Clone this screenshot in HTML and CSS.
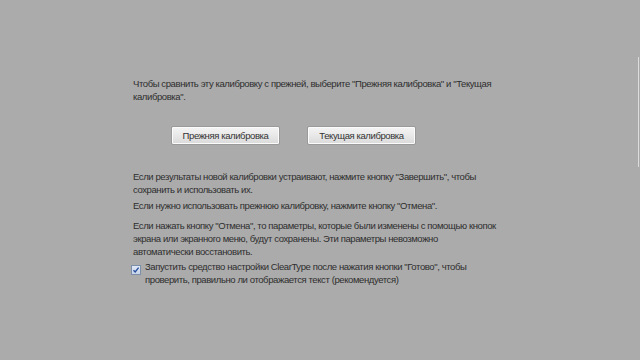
FILE: index.html
```html
<!DOCTYPE html>
<html lang="ru">
<head>
    <meta charset="UTF-8">
    <title>Средство настройки текста ClearType</title>
    <link rel="stylesheet" href="styles.css">
</head>
<body>
    <div class="page">
        <p class="txt first">Чтобы сравнить эту калибровку с прежней, выберите "Прежняя калибровка" и "Текущая<br>калибровка".</p>
        <div class="btns">
            <button class="btn">Прежняя калибровка</button>
            <button class="btn">Текущая калибровка</button>
        </div>
        <p class="txt p2">Если результаты новой калибровки устраивают, нажмите кнопку "Завершить", чтобы<br>сохранить и использовать их.</p>
        <p class="txt p3">Если нужно использовать прежнюю калибровку, нажмите кнопку "Отмена".</p>
        <p class="txt p4">Если нажать кнопку "Отмена", то параметры, которые были изменены с помощью кнопок<br>экрана или экранного меню, будут сохранены. Эти параметры невозможно<br>автоматически восстановить.</p>
        <label class="chk">
            <span class="box">
                <svg width="8" height="8" viewBox="0 0 8 8"><path d="M1.5 4.2 L3.2 6 L6.6 1.6" fill="none" stroke="#2b4f9e" stroke-width="1.4"/></svg>
            </span>
            <span class="txt">Запустить средство настройки ClearType после нажатия кнопки "Готово", чтобы<br>проверить, правильно ли отображается текст (рекомендуется)</span>
        </label>
    </div>
    <div class="edge"></div>
</body>
</html>
```

FILE: styles.css
```css
html, body {
    margin: 0;
    padding: 0;
    height: 100%;
    overflow: hidden;
}

body {
    background: #ababab;
    font-family: "Liberation Sans", Arial, sans-serif;
    color: #2e2e2e;
}

.page {
    padding: 77px 0 0 133px;
    width: 440px;
}

.txt {
    margin: 0;
    font-size: 9.5px;
    letter-spacing: -0.4px;
    line-height: 13px;
    white-space: nowrap;
}

.btns {
    display: flex;
    gap: 27px;
    margin: 23px 0 0 38px;
}

.btn {
    width: 109px;
    height: 19px;
    padding: 0;
    font-family: inherit;
    font-size: 9.5px;
    letter-spacing: -0.4px;
    color: #333;
    background: linear-gradient(#f4f4f4, #e8e8e8 50%, #dadada);
    border: 1px solid #9a9a9a;
    border-radius: 2px;
    box-shadow: inset 0 0 0 1px #fbfbfb;
}

.p2 { margin-top: 25px; }
.p3 { margin-top: 3px; }
.p4 { margin-top: 7px; }

.chk {
    display: flex;
    align-items: flex-start;
    margin: 2px 0 0 -2px;
}

.box {
    display: flex;
    align-items: center;
    justify-content: center;
    width: 8px;
    height: 8px;
    margin: 5px 4px 0 0;
    border: 1px solid #7d8ea8;
    background: linear-gradient(#dfe8f5, #c7d5ea);
}

.edge {
    position: absolute;
    top: 57px;
    right: 1px;
    width: 1px;
    height: 110px;
    background: #dcdcdc;
}
```
